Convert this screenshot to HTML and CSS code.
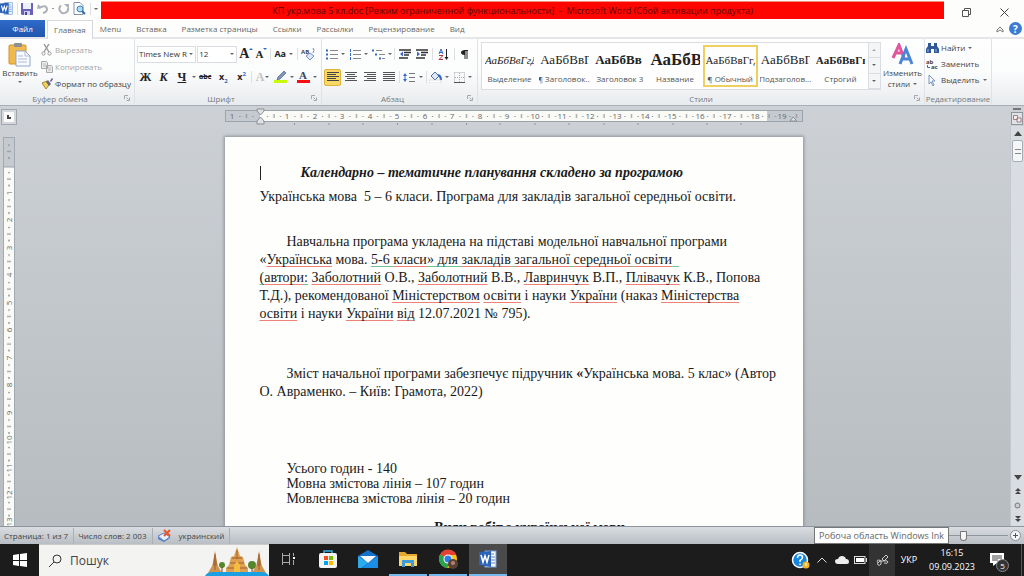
FILE: index.html
```html
<!DOCTYPE html>
<html lang="uk">
<head>
<meta charset="utf-8">
<title>КП укр.мова 5 кл.doc - Microsoft Word</title>
<link rel="stylesheet" href="styles.css">
</head>
<body>
<svg class="defs" aria-hidden="true">
  <symbol id="lines-left" viewBox="0 0 12 10"><path d="M0 .5h12M0 2.5h9M0 4.5h12M0 6.5h9M0 8.5h12" stroke="#444"/></symbol>
  <symbol id="lines-center" viewBox="0 0 12 10"><path d="M0 .5h12M2 2.5h8M0 4.5h12M2 6.5h8M0 8.5h12" stroke="#555"/></symbol>
  <symbol id="lines-right" viewBox="0 0 12 10"><path d="M0 .5h12M3 2.5h9M0 4.5h12M3 6.5h9M0 8.5h12" stroke="#555"/></symbol>
  <symbol id="lines-full" viewBox="0 0 12 10"><path d="M0 .5h12M0 2.5h12M0 4.5h12M0 6.5h12M0 8.5h12" stroke="#555"/></symbol>
  <symbol id="launcher" viewBox="0 0 6 6"><path d="M.5 4V.5H4M2.500 2.500l2 2M5.500 2.500v3h-3" fill="none" stroke="#a4a8ae"/></symbol>
  <symbol id="word" viewBox="0 0 18 18"><rect x="6" y="1" width="11" height="16" fill="#f4f7fc" stroke="#7d9fd3"/><path d="M11 4h4M12 7h4M12 10h4M12 13h4" stroke="#5a86ca"/><path d="M0 2l12-1v16L0 15z" fill="#2b63b8"/><path d="M2 5l2 7 2-6 2 6 2-7" fill="none" stroke="#fff" stroke-width="1.600"/></symbol>
</svg>
<div class="app">
  <header class="titlebar">
    <div class="quick">
      <svg class="i13" viewBox="0 0 18 18"><use href="#word"/></svg>
      <span class="sep"></span>
      <button class="ib" aria-label="Сохранить"><svg width="12" height="12"><path d="M0 0h12v12H1L0 11z" fill="#6a62b8"/><rect x="2" width="8" height="6" fill="#eef0fa"/><rect x="3" y="8" width="6" height="4" fill="#cfd2ea"/><rect x="4" y="9" width="2" height="3" fill="#4b4596"/></svg></button>
      <button class="ib" aria-label="Отменить"><svg width="12" height="12"><path d="M2 5q7-4 8 1q0 3-4 4" fill="none" stroke="#aeb2b8" stroke-width="2"/><path d="M0 6l1-5 4 4z" fill="#aeb2b8"/></svg></button>
      <span class="dot"></span>
      <button class="ib" aria-label="Повторить"><svg width="12" height="12"><path d="M3 2.500A4.300 4.300 0 1 0 10 5" fill="none" stroke="#aeb2b8" stroke-width="2"/><path d="M6 1h5v5z" fill="#aeb2b8"/></svg></button>
      <button class="ib" aria-label="Предварительный просмотр"><svg width="13" height="13"><path d="M1 .5h6l3 3v9H1z" fill="#fff" stroke="#8091a8"/><circle cx="7" cy="7" r="3" fill="#a9dcf7" stroke="#4381b7"/><path d="M9 9l3 3" stroke="#38699a" stroke-width="2"/></svg></button>
      <span class="sep"></span>
      <span class="caret"></span>
    </div>
    <h1 class="title">КП укр.мова 5 кл.doc [Режим ограниченной функциональности]&nbsp; -&nbsp; Microsoft Word (Сбой активации продукта)</h1>
    <div class="winbtns">
      <button class="ib" aria-label="Свернуть в окно"><svg width="9" height="9"><path d="M.5 2.500h6v6h-6zM2.500 2.500v-2h6v6h-2" fill="none" stroke="#555"/></svg></button>
      <button class="ib" aria-label="Закрыть"><svg width="9" height="9"><path d="M.5.5l8 8M8.500.5l-8 8" stroke="#444"/></svg></button>
    </div>
  </header>

  <nav class="tabs">
    <button class="tab file">Файл</button>
    <button class="tab active">Главная</button>
    <button class="tab">Menu</button>
    <button class="tab">Вставка</button>
    <button class="tab">Разметка страницы</button>
    <button class="tab">Ссылки</button>
    <button class="tab">Рассылки</button>
    <button class="tab">Рецензирование</button>
    <button class="tab">Вид</button>
    <div class="tabtools">
      <button class="ib" aria-label="Свернуть ленту"><svg width="8" height="8"><path d="M1 5l3-3 3 3v2L4 5 1 7z" fill="none" stroke="#777"/></svg></button>
      <button class="help" aria-label="Справка">?</button>
    </div>
  </nav>

  <section class="ribbon">
    <div class="group clipboard">
      <div class="body">
        <button class="big">
          <svg width="24" height="25"><rect x="1" y="3" width="17" height="19" rx="1" fill="#f0b94d" stroke="#d1952f"/><rect x="6" y="1" width="8" height="4" rx="1" fill="#8c8f94"/><path d="M8 9h9l5 5v10H8z" fill="#f9fbff" stroke="#8fa5c8"/><path d="M17 9v5h5M10 14h5M10 17h9M10 20h9" fill="none" stroke="#a9bbd8"/></svg>
          <span>Вставить</span><i class="caret"></i>
        </button>
        <div class="stack">
          <button class="line off"><svg width="12" height="12"><path d="M3 0l5 8M8 0L3 8" stroke="#999" stroke-width="1.400"/><circle cx="2.500" cy="9.500" r="1.600" fill="none" stroke="#999"/><circle cx="8.500" cy="9.500" r="1.600" fill="none" stroke="#999"/></svg>Вырезать</button>
          <button class="line off"><svg width="12" height="12"><path d="M.5.5h5l1 1v6h-6zM5.500 4.500h5l1 1v6h-6z" fill="#ececec" stroke="#aaa"/><path d="M2 3h3M2 5h3M7 7h3M7 9h3" stroke="#bbb"/></svg>Копировать</button>
          <button class="line"><svg width="12" height="12"><path d="M1 5l5-2 2 4-3 4z" fill="#f1d25e" stroke="#a88a28"/><path d="M5 4l3 4 2-2-3-4z" fill="#62647c"/><path d="M9 3l2-3 1 1-2 3z" fill="#5c4b9d"/></svg>Формат по образцу</button>
        </div>
      </div>
      <footer>Буфер обмена<svg class="launch"><use href="#launcher"/></svg></footer>
    </div>

    <div class="group font">
      <div class="body rows">
        <div class="row">
          <label class="combo wide"><select aria-label="Шрифт"><option>Times New R</option></select><i class="caret"></i></label>
          <label class="combo"><select aria-label="Размер шрифта"><option>12</option></select><i class="caret"></i></label>
          <button class="tb serif grow" aria-label="Увеличить размер">A<i class="caret up blue"></i></button>
          <button class="tb serif grow shrink" aria-label="Уменьшить размер">A<i class="caret blue"></i></button>
          <span class="sep"></span>
          <button class="tb w22"><b>Aa</b><i class="caret"></i></button>
          <span class="sep"></span>
          <button class="tb w18" aria-label="Очистить формат"><svg width="15" height="14"><text x="0" y="7" class="tiny">AB</text><path d="M5 9l4-3 4 3-4 4z" fill="#dce8fa" stroke="#6f8fc5"/><path d="M12 1q2 2 0 5" fill="none" stroke="#6f8fc5"/></svg></button>
        </div>
        <div class="row">
          <button class="tb w17 serif"><b>Ж</b></button>
          <button class="tb w17 serif"><b><em>К</em></b></button>
          <button class="tb w17 serif"><b><u>Ч</u></b></button>
          <i class="caret"></i>
          <button class="tb w17 strike">abc</button>
          <button class="tb w17"><b>x<sub>2</sub></b></button>
          <button class="tb w17"><b>x<sup>2</sup></b></button>
          <span class="sep"></span>
          <button class="tb w18 serif ghost">A<i class="caret"></i></button>
          <button class="tb w22" aria-label="Цвет выделения"><svg width="13" height="12"><path d="M4 6l6-6 2 2-6 6-3 1z" fill="#7f95b5" stroke="#4d678e" stroke-width=".7"/><rect y="9" width="13" height="3" fill="#c8fb08"/></svg><i class="caret"></i></button>
          <button class="tb w22" aria-label="Цвет текста"><svg width="13" height="12"><text x="2" y="8" class="fa">A</text><rect y="9" width="13" height="3" fill="#fb0d0d"/></svg><i class="caret"></i></button>
        </div>
      </div>
      <footer>Шрифт<svg class="launch"><use href="#launcher"/></svg></footer>
    </div>

    <div class="group para">
      <div class="body rows">
        <div class="row">
          <button class="tb w22" aria-label="Маркеры"><svg width="12" height="12"><path d="M4 2.500h8M4 6.500h8M4 10.500h8" stroke="#888"/><path d="M0 2.500h2M0 6.500h2M0 10.500h2" stroke="#3668c8" stroke-width="2"/></svg><i class="caret"></i></button>
          <button class="tb w22" aria-label="Нумерация"><svg width="12" height="12"><path d="M4 2.500h8M4 6.500h8M4 10.500h8" stroke="#888"/><path d="M1.500 1v3M1.500 5v3M1.500 9v3" stroke="#3668c8"/></svg><i class="caret"></i></button>
          <button class="tb w22" aria-label="Многоуровневый список"><svg width="13" height="12"><path d="M4 2.500h6M7 6.500h6M10 10.500h3" stroke="#888"/><path d="M0 2.500h2M3 6.500h2M7 10.500h2" stroke="#3668c8" stroke-width="2"/></svg><i class="caret"></i></button>
          <span class="sep"></span>
          <button class="tb w16" aria-label="Уменьшить отступ"><svg width="12" height="10"><path d="M0 1h12M5 3.500h7M5 6h5M0 9h9" stroke="#333" stroke-width="1.500"/><path d="M4 2.500v5L1 5z" fill="#3668c8"/></svg></button>
          <button class="tb w16" aria-label="Увеличить отступ"><svg width="12" height="10"><path d="M0 1h12M5 3.500h7M5 6h5M0 9h9" stroke="#333" stroke-width="1.500"/><path d="M1 2.500v5L4 5z" fill="#3668c8"/></svg></button>
          <span class="sep"></span>
          <button class="tb w18" aria-label="Сортировка"><svg width="11" height="13"><path d="M1 6l2-5 2 5M1.500 4.500h3" fill="none" stroke="#3668c8"/><path d="M1 7.500h4l-4 4h4" fill="none" stroke="#b3343c"/><path d="M8.500 1v10" stroke="#222"/><path d="M6.500 9h4l-2 3z" fill="#222"/></svg></button>
          <span class="sep"></span>
          <button class="tb w18" aria-label="Знаки абзаца"><svg width="9" height="11"><path d="M4 1.500h4M5 1v9M7 1v9" stroke="#222"/><path d="M5 1v5Q1 6 1 3.500T5 1z" fill="#222"/></svg></button>
        </div>
        <div class="row">
          <button class="tb w17 on" aria-label="По левому краю"><svg width="12" height="10"><use href="#lines-left"/></svg></button>
          <button class="tb w17" aria-label="По центру"><svg width="12" height="10"><use href="#lines-center"/></svg></button>
          <button class="tb w17" aria-label="По правому краю"><svg width="12" height="10"><use href="#lines-right"/></svg></button>
          <button class="tb w17" aria-label="По ширине"><svg width="12" height="10"><use href="#lines-full"/></svg></button>
          <span class="sep"></span>
          <button class="tb w22" aria-label="Интервал"><svg width="13" height="11"><path d="M6 1.500h6M6 5.500h6M6 9.500h6" stroke="#777"/><path d="M0 4l2-3 2 3zM0 7l2 3 2-3z" fill="#3668c8"/><path d="M2 3v5" stroke="#3668c8"/></svg><i class="caret"></i></button>
          <span class="sep"></span>
          <button class="tb w22" aria-label="Заливка"><svg width="13" height="12"><path d="M2 5l4-4 4 4-4 4z" fill="#dfe8f5" stroke="#566f9c"/><path d="M9 4q3 1 3 5" fill="none" stroke="#3668c8" stroke-width="2"/><rect y="9" width="12" height="3" fill="#fff" stroke="#bbb" stroke-width=".5"/></svg><i class="caret"></i></button>
          <button class="tb w22" aria-label="Границы"><svg width="11" height="11"><path d="M.5.5h10v10M.5.5v10M5.500 1v9M1 5.500h9" fill="none" stroke="#aaa" stroke-dasharray="1 1"/><path d="M0 10.500h11" stroke="#555"/></svg><i class="caret"></i></button>
        </div>
      </div>
      <footer>Абзац<svg class="launch"><use href="#launcher"/></svg></footer>
    </div>

    <div class="group styles">
      <div class="body">
        <div class="gallery">
          <button class="style"><span class="sample s11"><em>АаБбВвГгД</em></span><span>Выделение</span></button>
          <button class="style"><span class="sample s13">АаБбВвГ</span><span>¶ Заголовок...</span></button>
          <button class="style"><span class="sample s13"><b>АаБбВв</b></span><span>Заголовок 3</span></button>
          <button class="style"><span class="sample s17"><b>АаБбВ</b></span><span>Название</span></button>
          <button class="style chosen"><span class="sample s11">АаБбВвГгД</span><span>¶ Обычный</span></button>
          <button class="style"><span class="sample s13">АаБбВвГ</span><span>Подзаголов...</span></button>
          <button class="style"><span class="sample s11"><b>АаБбВвГг</b></span><span>Строгий</span></button>
          <div class="updown"><button aria-label="Вверх"><i class="caret up"></i></button><button aria-label="Вниз"><i class="caret"></i></button><button aria-label="Все стили"><i class="caret bar"></i></button></div>
        </div>
        <button class="big change">
          <svg width="24" height="24" viewBox="0 0 24 24"><path d="M2 15L8 2l5 13M4 10h7" fill="none" stroke="#e0559c" stroke-width="3"/><path d="M9 21l6-15 6 15M11 16h8" fill="none" stroke="#4b86d6" stroke-width="3"/></svg>
          <span>Изменить</span><span>стили <i class="caret"></i></span>
        </button>
      </div>
      <footer>Стили<svg class="launch"><use href="#launcher"/></svg></footer>
    </div>

    <div class="group edit">
      <div class="body stack">
        <button class="line"><svg width="13" height="12"><path d="M2 1h3v3h3V1h3v3l2 3v4H8V7H5v4H0V7l2-3z" fill="#2f5897"/><path d="M2 7v3M10 7v3" stroke="#9ab8e4"/></svg>Найти <i class="caret"></i></button>
        <button class="line"><svg width="13" height="12"><text x="0" y="6" class="tiny">ab</text><text x="5" y="11" class="tiny">ac</text><path d="M1.500 7v2.500H4" fill="none" stroke="#3668c8"/></svg>Заменить</button>
        <button class="line"><svg width="13" height="12"><path d="M3 1v9l2-2 2 4 1-1-2-4h3z" fill="#f5f9ff" stroke="#7b93bd"/></svg>Выделить <i class="caret"></i></button>
      </div>
      <footer>Редактирование</footer>
    </div>
  </section>

  <main class="work">
    <button class="corner" aria-label="Табуляция"><b></b></button>
    <div class="rulerrow">
      <svg class="hruler" viewBox="0 0 578 18" preserveAspectRatio="xMidYMid meet">
        <defs><pattern id="cm" x="35" y="0" width="27.5" height="14" patternUnits="userSpaceOnUse"><path d="M7 8.500h1M20 8.500h1" stroke="#777"/><path d="M14 6v4" stroke="#888"/></pattern></defs>
        <rect x=".5" y="2.500" width="577" height="11" fill="#c5cad1" stroke="#9da3ab"/>
        <rect x="35" y="3" width="507" height="10" fill="#fafaf7"/>
        <rect x="3" y="1" width="572" height="13" fill="url(#cm)"/>
        <g class="num"><text x="7" y="11">1</text><text x="62" y="11">1</text><text x="90" y="11">2</text><text x="117" y="11">3</text><text x="145" y="11">4</text><text x="172" y="11">5</text><text x="200" y="11">6</text><text x="227" y="11">7</text><text x="255" y="11">8</text><text x="282" y="11">9</text><text x="310" y="11">10</text><text x="337" y="11">11</text><text x="365" y="11">12</text><text x="392" y="11">13</text><text x="420" y="11">14</text><text x="447" y="11">15</text><text x="475" y="11">16</text><text x="502" y="11">17</text><text x="530" y="11">18</text><text x="557" y="11">19</text></g>
        <path d="M69.500 15v2M104 15v2M138 15v2M172.500 15v2M207 15v2M241.500 15v2M275 15v2M310 15v2M344 15v2M379 15v2M413 15v2M448 15v2M482 15v2M516 15v2" stroke="#8f959c"/>
        <path d="M32 1h7v2l-3.500 4L32 3zM32 16v-3l3.500-4 3.500 4v3zM565 13l3-4 4 4z" fill="#dfe1e4" stroke="#8b8f95"/>
      </svg>
    </div>
    <div class="scrolltop"><i></i><svg width="12" height="13"><rect x=".5" y=".5" width="11" height="12" fill="#dfe3e8" stroke="#8f959d"/><path d="M2.500 3.500h4v4h-4zM6 6h4v4H6z" fill="#f6efef" stroke="#a07f82"/></svg></div>

    <div class="vcol">
      <svg class="vruler" width="12" height="400">
        <defs><pattern id="cmv" x="0" y="28" width="12" height="27.5" patternUnits="userSpaceOnUse"><path d="M5 7.500h2M5 20.500h2" stroke="#888"/><path d="M4 14h4" stroke="#888"/></pattern></defs>
        <rect x=".5" y=".5" width="11" height="410" fill="#fafaf7" stroke="#a3a9b0"/>
        <rect x="1" y="1" width="10" height="29" fill="#c5cad1"/>
        <rect y="2" width="12" height="398" fill="url(#cmv)"/>
        <path d="M0 30h12" stroke="#9da3ab"/>
        <g class="num"><text transform="translate(9 56) rotate(-90)">1</text><text transform="translate(9 83) rotate(-90)">2</text><text transform="translate(9 111) rotate(-90)">3</text><text transform="translate(9 138) rotate(-90)">4</text><text transform="translate(9 166) rotate(-90)">5</text><text transform="translate(9 193) rotate(-90)">6</text><text transform="translate(9 221) rotate(-90)">7</text><text transform="translate(9 248) rotate(-90)">8</text><text transform="translate(9 276) rotate(-90)">9</text><text transform="translate(9 303) rotate(-90)">10</text><text transform="translate(9 331) rotate(-90)">11</text><text transform="translate(9 358) rotate(-90)">12</text><text transform="translate(9 385) rotate(-90)">13</text></g>
      </svg>
    </div>
    <div class="canvas">
      <article class="page">
        <p class="head"><span class="cursor"></span>Календарно – тематичне планування складено за програмою</p>
        <p class="sub">Українська мова&nbsp; 5 – 6 класи. Програма для закладів загальної середньої освіти.</p>
        <p class="main ind">Навчальна програма укладена на підставі модельної навчальної програми<br>«<u>Українська</u> мова. <u class="g">5-6 </u><u>класи</u><u class="g">» для </u><u>закладів</u><u class="g"> </u><u>загальної</u><u class="g"> </u><u>середньої</u><u class="g"> </u><u>освіти</u><u class="g">&nbsp;&nbsp; </u><br><u class="g">(</u><u>автори</u><u class="g">:</u> <u>Заболотний</u> О.В., <u>Заболотний</u> В.В., <u>Лавринчук</u> В.П., <u>Плівачук</u> К.В., Попова<br>Т.Д.), рекомендованої <u>Міністерством</u> <u>освіти</u> і науки <u>України</u> (наказ <u>Міністерства</u><br><u>освіти</u> і науки <u>України</u> <u>від</u> 12.07.2021 № 795).</p>
        <p class="book ind">Зміст начальної програми забезпечує підручник <b>«</b>Українська мова. 5 клас» (Автор<br>О. Авраменко. – Київ: Грамота, 2022)</p>
        <div class="hours"><p>Усього годин - 140</p><p>Мовна змістова лінія – 107 годин</p><p>Мовленнєва змістова лінія – 20 годин</p></div>
        <h2 class="kinds ind">Види робіт з української мови</h2>
      </article>
    </div>
    <div class="scroll">
      <button aria-label="Прокрутить вверх"><i class="tri up"></i></button>
      <div class="thumb"><i></i></div>
      <div class="track"></div>
      <button aria-label="Прокрутить вниз"><i class="tri"></i></button>
      <button aria-label="Предыдущая страница"><svg width="6" height="8"><path d="M0 4l3-3 3 3zM0 7l3-3 3 3z" fill="#444"/></svg></button>
      <button aria-label="Выбор объекта"><svg width="7" height="7"><circle cx="3.500" cy="3.500" r="2.500" fill="#ccc" stroke="#777"/></svg></button>
      <button aria-label="Следующая страница"><svg width="6" height="8"><path d="M0 1h6L3 4zM0 4h6L3 7z" fill="#444"/></svg></button>
    </div>
  </main>

  <div class="status">
    <span class="cell">Страница: 1 из 7</span>
    <span class="cell">Число слов: 2 003</span>
    <span class="cell lang"><svg width="15" height="13"><path d="M1 7l6-3 6 4-6 4z" fill="#e8f0fc" stroke="#5b7fc0"/><path d="M1 8v2l6 3 6-4V8l-6 4z" fill="#4c79c9"/><path d="M7 1l6 6M13 1L7 7" stroke="#e8552b" stroke-width="2"/></svg>украинский</span>
    <div class="zoom">
      <input type="range" aria-label="Масштаб" min="0" max="100" value="23">
      <button class="plus" aria-label="Увеличить"><svg width="11" height="11"><circle cx="5.500" cy="5.500" r="5" fill="#f5f6f7" stroke="#8a8f96"/><path d="M3 5.500h5M5.500 3v5" stroke="#555"/></svg></button>
    </div>
    <div class="tip" role="tooltip">Робоча область Windows Ink</div>
  </div>

  <footer class="taskbar">
    <button class="start" aria-label="Пуск"><svg width="14" height="14"><path d="M0 2l6-1v6H0zM7 1l7-1v7H7zM0 8h6v5l-6-1zM7 8h7v6l-7-1z" fill="#fff"/></svg></button>
    <label class="search">
      <svg width="14" height="14"><circle cx="9" cy="5" r="4" fill="none" stroke="#333"/><path d="M6 8l-5 5" stroke="#333"/></svg>
      <input type="text" placeholder="Пошук" aria-label="Пошук">
      <svg class="temple" width="64" height="30" viewBox="0 0 64 30"><path d="M6 27L10 5l4 22zM50 27l4-22 4 22z" fill="#b9793a"/><path d="M3 27l4-7h6l4 7zM47 27l4-7h6l4 7z" fill="#cf944f"/><path d="M21 27v-5l3-3 2-8 3-1 3-9 3 9 3 1 2 8 3 3v5z" fill="#dfa052"/><path d="M27 12h10M25 17h14M22 22h20M10 8v16M54 8v16M32 4v9" stroke="#9d5f2c"/><path d="M29 27v-8l3-4 3 4v8z" fill="#f5bd3f"/><circle cx="17" cy="19" r="3" fill="#55862c"/><circle cx="47" cy="19" r="4" fill="#55862c"/><path d="M17 21v5M47 22v4" stroke="#6d4520"/><path d="M0 30q2-4 8-4h48q6 0 8 4z" fill="#199fe2"/></svg>
    </label>
    <div class="apps">
      <button aria-label="Представлення завдань"><svg width="14" height="14"><path d="M1.500 1v2.500h7V1M1.500 13v-2.500h7V13M1.500 3v8M8.500 3v8M12.500 1v3M12.500 8v5" fill="none" stroke="#aaa"/><rect x="12" y="5" width="2" height="2" fill="#fff"/></svg></button>
      <button aria-label="Store"><svg width="20" height="20"><path d="M6 5V2h8v3" fill="none" stroke="#35aee0" stroke-width="1.500"/><rect x="1" y="4" width="18" height="15" rx="2" fill="#f4f4f4"/><path d="M6 7h4v4H6z" fill="#f25022"/><path d="M11 7h4v4h-4z" fill="#7fba00"/><path d="M6 12h4v4H6z" fill="#00a4ef"/><path d="M11 12h4v4h-4z" fill="#ffb900"/></svg></button>
      <button aria-label="Пошта"><svg width="20" height="18"><path d="M0 6l10-6 10 6v12H0z" fill="#1473c9"/><path d="M2 6h16l-8 7z" fill="#f4f8fb"/><path d="M0 6l10 7-7 5H0z" fill="#2dabea"/><path d="M20 6L4 18h16z" fill="#1b8de5"/></svg></button>
      <button class="run" aria-label="Провідник"><svg width="18" height="16"><path d="M0 1h6l2 2h10v12H0z" fill="#e5a72c"/><path d="M0 5h18v10H0z" fill="#ffd768"/><path d="M3 16V9h12v7h-3v-4H6v4z" fill="#3d9bdb"/></svg></button>
      <button class="run" aria-label="Chrome"><svg width="20" height="20"><circle cx="10" cy="10" r="9" fill="#fbc116"/><path d="M10 10L2 5.500A9.200 9.200 0 0 1 18.500 6H10z" fill="#e34133"/><path d="M2 5.500A9.200 9.200 0 0 0 9 19l4-7-3-2z" fill="#2ba24c"/><circle cx="10" cy="10" r="4.500" fill="#fff"/><circle cx="10" cy="10" r="3.500" fill="#2b7de9"/><circle cx="15" cy="15" r="5" fill="#594139"/><circle cx="15" cy="14" r="2" fill="#b48272"/></svg></button>
      <button class="run cur" aria-label="Word"><svg width="18" height="18"><use href="#word"/></svg></button>
    </div>
    <div class="tray">
      <button class="w24" aria-label="Довідка"><svg width="19" height="18"><circle cx="9" cy="9" r="7.500" fill="#1687dd" stroke="#fff" stroke-width="1.500"/><path d="M6.500 7q0-3 2.500-3t2.500 2.500Q11.500 8 9 9.500V11M9 12.500V14" fill="none" stroke="#fff" stroke-width="1.500"/><circle cx="15" cy="14" r="3.500" fill="#f3b526"/><path d="M15 12v3" stroke="#fff"/></svg></button>
      <button class="w20" aria-label="Приховані піктограми"><svg width="10" height="6"><path d="M.5 5.500L5 1l4.500 4.500" fill="none" stroke="#ddd"/></svg></button>
      <button class="w20" aria-label="OneDrive"><svg width="14" height="9"><path d="M3 8q-3 0-3-3 0-2 3-2 1-3 4-3 3 0 4 3 3 0 3 3 0 2-2 2z" fill="#eee"/></svg></button>
      <button class="w17" aria-label="Батарея"><svg width="13" height="8"><rect x=".5" y=".5" width="10.500" height="7" fill="none" stroke="#ddd"/><rect x="2" y="2" width="8" height="4" fill="#fff"/><path d="M12.500 2v4" stroke="#ddd"/></svg></button>
      <button class="pen" aria-label="Windows Ink"><svg width="13" height="13"><path d="M2 9q-2-3 1-3t2 4q-1 2-3 1T4 7q5 1 6-2l2-2-2-2-4 4 2 2q4-1 4 1t-4 1" fill="none" stroke="#ccc"/></svg></button>
      <span class="kb">УКР</span>
      <time class="clock"><span>16:15</span><span>09.09.2023</span></time>
      <button class="note" aria-label="Сповіщення"><svg width="14" height="14"><path d="M0 0h14v10H7l-4 3v-3H0z" fill="#fff"/><path d="M2 3h10M2 5h10M2 7h6" stroke="#444"/></svg><span class="badge">5</span></button>
    </div>
  </footer>
</div>
</body>
</html>
```
FILE: styles.css
```css
* { box-sizing: border-box; }
body { margin: 0; background: #fdfefc; }
body, button, input, select { font: 8px/12px "Open Sans", "Noto Sans", sans-serif; color: #444; }
button { padding: 0; border: 0; background: none; white-space: nowrap; }
svg { display: block; flex: none; }
p, h1, h2 { margin: 0; }
.defs { position: absolute; width: 0; height: 0; }
.app { height: 100vh; display: flex; flex-direction: column; overflow: hidden; }

.caret { flex: none; display: inline-block; border: 2px solid transparent; border-top-color: #666; border-bottom: 0; }
.caret.up { border-top: 0; border-bottom: 2px solid #aaa; }
.caret.bar { box-shadow: 0 -2px 0 -1px #777; }
.caret.blue { align-self: flex-start; margin-top: 2px; border-top-color: #3668c8; border-bottom-color: #3668c8; }
.sep { flex: none; width: 1px; height: 12px; background: #dcdfe3; }
.dot { width: 2px; height: 1px; background: #999; }
.ib { display: grid; place-items: center; }

.titlebar { flex: none; height: 20px; display: flex; align-items: flex-start; }
.quick { width: 101px; height: 17px; padding: 0 3px 0 0; display: flex; align-items: center; justify-content: space-between; }
.i13 { width: 13px; height: 13px; }
.title { flex: 1; height: 18px; margin-top: 1px; padding-right: 20px; background: #fe0500; border-top: 1px solid #f58a78; color: #5c0803; font-size: 9px; font-weight: 400; line-height: 17px; text-align: center; white-space: nowrap; overflow: hidden; }
.winbtns { width: 80px; height: 22px; padding: 2px 15px 0 18px; display: flex; align-items: center; justify-content: space-between; }

.tabs { flex: none; height: 19px; display: flex; border-bottom: 2px solid #e4e6e9; }
.tab { padding: 0 8px 0 7px; color: #666; }
.file { width: 45px; padding: 0; background: linear-gradient(#2f6bc9, #1f55ae); color: #fff; }
.active { height: 19px; margin-left: 2px; padding: 0 6px; background: #fefefe; border: 1px solid #d5d8dc; border-bottom: 0; }
.tabtools { margin-left: auto; padding-right: 2px; display: flex; align-items: center; gap: 5px; }
.help { width: 13px; height: 13px; border-radius: 50%; background: #3c7bd0; color: #fff; font-weight: 700; font-size: 10px; }

.ribbon { flex: none; height: 67px; display: flex; padding-right: 32px; background: linear-gradient(#fefefe, #fbfcfc 50%, #e8ebee); border-bottom: 1px solid #a9afb6; }
.group { flex: none; display: flex; flex-direction: column; border-right: 1px solid #dfe2e6; }
.group footer { height: 13px; display: flex; align-items: center; justify-content: center; color: #74797f; position: relative; }
.clipboard footer, .font footer, .para footer { padding-right: 14px; }
.launch { position: absolute; right: 4px; top: 3px; width: 6px; height: 6px; }
.body { flex: 1; display: flex; min-height: 0; }
.clipboard { width: 135px; }
.font { width: 187px; }
.para { width: 156px; }
.styles { flex: 1; min-width: 0; }
.edit { width: 67px; }
.big { width: 40px; display: flex; flex-direction: column; align-items: center; padding-top: 3px; line-height: 11px; }
.big .caret { margin-top: 3px; }
.stack { display: flex; flex-direction: column; gap: 5px; padding: 5px 0 0 1px; }
.line { display: flex; align-items: center; gap: 2px; height: 12px; }
.line .caret { margin-left: 1px; }
.edit .stack { gap: 4px; padding-top: 3px; }
.off { color: #a6a6a6; }
.rows { flex-direction: column; gap: 5px; padding: 6px 3px 0 2px; }
.row { display: flex; align-items: center; justify-content: space-between; height: 18px; }
.combo { width: 40px; height: 17px; display: flex; align-items: center; border: 1px solid #dadde1; background: #fff; padding-right: 2px; }
.combo.wide { width: 59px; }
.combo + .combo { margin-left: -1px; }
.combo select { flex: 1; min-width: 0; appearance: none; border: 0; background: none; padding: 0 0 0 1px; color: #333; }
.tb { height: 17px; display: flex; align-items: center; justify-content: center; gap: 3px; color: #222; }
.tb b { font-size: 9px; }
.tb.serif, .serif b { font-family: "Liberation Serif", serif; font-size: 12px; font-weight: 700; }
.tb.grow { gap: 0; font-size: 14px; }
.tb.shrink { font-size: 11px; }
.tb sup, .tb sub { font-size: 6px; line-height: 6px; color: #3668c8; }
.tb.strike { text-decoration: line-through; font-weight: 700; font-size: 7px; }
.tb.ghost { color: #c4c4c4; gap: 1px; }
.w16 { width: 16px; }
.w17 { width: 17px; }
.w18 { width: 18px; }
.w20 { width: 20px; }
.w22 { width: 22px; }
.w24 { width: 24px; }
.tiny { font: 700 6px "Open Sans", sans-serif; fill: #444; }
.fa { font: 700 11px "Liberation Serif", serif; fill: #34466b; }
.on { background: #f9d965; border: 1px solid #dfb23c; border-radius: 2px; }

.gallery { flex: 1; min-width: 0; height: 48px; margin: 3px 0 0 3px; display: flex; border: 1px solid #dadde1; background: #fefefe; }
.style { flex: 1; min-width: 0; padding: 0 1px; margin: 2px 0; border: 2px solid transparent; display: flex; flex-direction: column; align-items: center; color: #555; overflow: hidden; }
.chosen { border-color: #efcf60; }
.sample { width: 100%; height: 26px; line-height: 26px; overflow: hidden; text-align: left; color: #222; font-family: "Liberation Serif", serif; }
.s11 { font-size: 11px; }
.s13 { font-size: 13px; }
.s17 { font-size: 17px; }
.updown { width: 12px; display: flex; flex-direction: column; border-left: 1px solid #dadde1; background: #f4f5f7; }
.updown button { flex: 1; display: grid; place-items: center; border-bottom: 1px solid #dadde1; }
.change { width: 43px; padding-top: 4px; }
.change .caret { margin: 0 0 2px 1px; }

.work { flex: 1; min-height: 0; display: grid; grid-template: 20px 1fr / 17px 1fr 14px; background: linear-gradient(#cdd1d6, #b7bcc0); }
.corner { margin: 3px 0 0 1px; width: 16px; height: 16px; border: 1px solid #a0a6ad; background: #fafafa; box-shadow: inset 0 0 0 2px #d4d8dc; display: grid; place-items: center; }
.corner b { width: 4px; height: 4px; border: solid #444; border-width: 0 0 2px 2px; }
.rulerrow { display: flex; justify-content: center; padding-top: 2px; }
.hruler { width: 578px; height: 18px; }
.num { font: 8px "Open Sans", sans-serif; fill: #666; text-anchor: middle; }
.scrolltop { display: flex; flex-direction: column; align-items: center; gap: 2px; padding-top: 2px; }
.scrolltop i { width: 8px; height: 2px; background: #777; }
.vcol { padding: 11px 0 0 3px; overflow: hidden; }
.canvas { display: flex; justify-content: center; padding-top: 11px; overflow: hidden; min-height: 0; }
.page { width: 578px; height: 600px; flex: none; padding: 27px 30px 0 35px; background: #fefefc; box-shadow: 0 0 3px 1px #8b9094; font: 14px/18px "Liberation Serif", serif; color: #1a1a1a; white-space: nowrap; }
.head { display: flex; font-weight: 700; font-style: italic; }
.cursor { width: 1px; height: 14px; margin: 2px 40px 0 0; background: #222; }
.sub { margin-top: 6px; }
.main { margin-top: 27px; }
.ind { text-indent: 27px; }
.page u { text-decoration: underline 1px #ee8078; text-underline-offset: 2px; text-decoration-skip-ink: none; }
.page .g { text-decoration-color: #6cc493; }
.book { margin-top: 42px; }
.hours { margin-top: 60px; padding-left: 27px; line-height: 15px; }
.kinds { margin-top: 13px; font-size: 14px; text-align: center; }
.scroll { display: flex; flex-direction: column; background: #d9dde2; border-left: 1px solid #c3c8ce; }
.scroll button { height: 14px; display: grid; place-items: center; }
.track { flex: 1; }
.thumb { height: 22px; margin: 0 1px; border: 1px solid #a7adb5; border-radius: 2px; background: #f5f6f8; display: grid; place-items: center; }
.thumb i { width: 6px; height: 5px; border: solid #888; border-width: 1px 0; }
.tri { border: 4px solid transparent; border-top: 5px solid #444; border-bottom: 0; }
.tri.up { border-top: 0; border-bottom: 5px solid #444; }

.status { flex: none; height: 18px; position: relative; display: flex; align-items: center; background: linear-gradient(#d9dde1, #b9bec4); border-top: 1px solid #8e949b; }
.cell { padding: 0 5px 0 4px; border-right: 1px solid #aab0b7; line-height: 16px; }
.lang { display: flex; align-items: center; gap: 7px; }
.zoom { margin-left: auto; display: flex; align-items: center; gap: 2px; padding-right: 3px; }
.zoom input { appearance: none; width: 60px; height: 12px; margin: 0; background: linear-gradient(#8f959c, #8f959c) center / 100% 1px no-repeat; }
.zoom input::-webkit-slider-thumb { appearance: none; width: 7px; height: 10px; border: 1px solid #777; border-radius: 1px 1px 4px 4px; background: #f5f6f7; }
.tip { position: absolute; right: 75px; top: 0; height: 17px; padding: 0 4px; background: #fefefe; border: 1px solid #777; font-size: 9px; line-height: 15px; color: #666; white-space: nowrap; }

.taskbar { flex: none; height: 32px; display: flex; background: #1c1c1c; }
.start { width: 39px; display: grid; place-items: center; }
.search { width: 230px; display: flex; align-items: center; gap: 8px; padding-left: 9px; background: #f3f3f2; border-top: 1px solid #ccc; }
.search input { flex: 1; min-width: 0; border: 0; padding: 0; background: none; font-size: 12px; line-height: 16px; }
.search input::placeholder { color: #444; opacity: 1; }
.temple { align-self: flex-end; }
.apps { display: flex; gap: 2px; }
.apps button { width: 38px; display: grid; place-items: center; border-bottom: 2px solid transparent; }
.apps .run { border-color: #76b9ed; }
.apps .cur { background: #4a4a4a; }
.tray { margin-left: auto; display: flex; color: #fff; }
.tray button { display: grid; place-items: center; }
.tray .pen { width: 26px; background: #333; }
.kb { width: 28px; line-height: 32px; text-align: center; font-size: 9px; }
.clock { width: 58px; display: flex; flex-direction: column; justify-content: center; text-align: center; font-size: 9px; line-height: 14px; }
.tray .note { width: 41px; margin-right: 2px; border-right: 1px solid #555; position: relative; padding-right: 8px; }
.badge { position: absolute; left: 15px; top: 15px; width: 13px; height: 13px; border: 1px solid #888; border-radius: 50%; background: #333; color: #fff; line-height: 11px; }
```
